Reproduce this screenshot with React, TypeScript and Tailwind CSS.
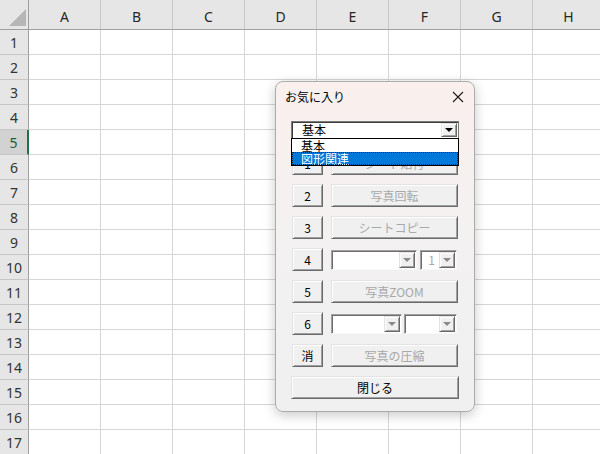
import React from 'react'

const cols = ['A', 'B', 'C', 'D', 'E', 'F', 'G', 'H']
const rows = Array.from({ length: 17 }, (_, i) => i + 1)

function Sheet() {
  return (
    <div className="flex flex-col font-['Noto_Sans',sans-serif]">
      <div className="flex h-[30px]">
        <div className="relative w-[29px] shrink-0 bg-[#e6e6e6] border-r border-b border-[#9f9f9f]">
          <div className="absolute right-[2px] bottom-[3px] w-0 h-0 border-l-[17px] border-l-transparent border-b-[17px] border-b-[#b6b6b6]" />
        </div>
        {cols.map((c) => (
          <div
            key={c}
            className="w-[72px] shrink-0 flex items-center justify-center pt-[3px] bg-[#e6e6e6] border-r border-r-[#c6c6c6] border-b border-b-[#9f9f9f] text-[14px] text-[#262626]"
          >
            {c}
          </div>
        ))}
      </div>
      {rows.map((r) => (
        <div key={r} className="flex h-[25px] shrink-0">
          <div
            className={
              r === 5
                ? 'w-[29px] shrink-0 flex items-center justify-center bg-[#d2d2d2] border-r-2 border-r-[#217346] border-b border-b-[#c6c6c6] text-[14px] text-[#1d5c3a]'
                : 'w-[29px] shrink-0 flex items-center justify-center bg-[#e6e6e6] border-r border-r-[#9f9f9f] border-b border-b-[#c6c6c6] text-[14px] text-[#333]'
            }
          >
            {r}
          </div>
          {cols.map((c) => (
            <div key={c} className="w-[72px] shrink-0 bg-white border-r border-b border-[#d6d6d6]" />
          ))}
        </div>
      ))}
    </div>
  )
}

function Btn({ children, disabled, className }: { children?: React.ReactNode; disabled?: boolean; className?: string }) {
  return (
    <div
      className={`flex items-center justify-center h-[23px] shrink-0 bg-[#f0f0f0] border border-t-[#e3e3e3] border-l-[#e3e3e3] border-r-[#696969] border-b-[#696969] shadow-[inset_1px_1px_0_#ffffff,inset_-1px_-1px_0_#a0a0a0] text-[12px] leading-none ${
        disabled ? 'text-[#a8a8a8]' : 'text-black'
      } ${className ?? ''}`}
    >
      {children}
    </div>
  )
}

function Arrow({ dark }: { dark?: boolean }) {
  return (
    <div className="w-[16px] h-full shrink-0 flex items-center justify-center bg-[#f0f0f0] border border-t-[#e3e3e3] border-l-[#e3e3e3] border-r-[#696969] border-b-[#696969] shadow-[inset_1px_1px_0_#ffffff,inset_-1px_-1px_0_#a0a0a0]">
      <div
        className={
          dark
            ? 'w-0 h-0 border-l-[4px] border-r-[4px] border-t-[4px] border-l-transparent border-r-transparent border-t-black'
            : 'w-0 h-0 border-l-[4px] border-r-[4px] border-t-[4px] border-l-transparent border-r-transparent border-t-[#8a8a8a]'
        }
      />
    </div>
  )
}

function Combo({ value, className }: { value?: string; className?: string }) {
  return (
    <div
      className={`flex h-[20px] shrink-0 bg-white border border-t-[#a0a0a0] border-l-[#a0a0a0] border-r-[#f8f8f8] border-b-[#f8f8f8] shadow-[inset_1px_1px_0_#6e6e6e] p-[1px] ${className ?? ''}`}
    >
      <div className="flex-1 flex items-center justify-end pr-[4px] text-[12px] text-[#a8a8a8]">{value}</div>
      <Arrow />
    </div>
  )
}

function Favorites() {
  return (
    <div className="absolute left-[275px] top-[81px] w-[200px] h-[331px] rounded-[8px] border border-[#ababab] bg-linear-to-b from-[#faf0ee] via-[#f3f1f1] to-[#f0f0f0] shadow-[0_3px_12px_rgba(0,0,0,0.22)] overflow-hidden font-['Noto_Sans_CJK_JP',sans-serif]">
      <div className="h-[29px] flex items-center justify-between pl-[9px] pr-[9px] text-[12px] text-black">
        <span>お気に入り</span>
        <svg width="12" height="12" viewBox="0 0 12 12" className="mr-[1px]">
          <path d="M1 1 L11 11 M11 1 L1 11" stroke="#1a1a1a" strokeWidth="1.1" />
        </svg>
      </div>
      <div className="flex flex-col px-[15px] pt-[10px]">
        <div className="relative">
          <div className="flex h-[18px] bg-white border border-[#7a7a7a] shadow-[inset_1px_1px_0_#3c3c3c] p-[1px]">
            <div className="flex-1 flex items-center pl-[9px] text-[12px] text-black leading-none">基本</div>
            <Arrow dark />
          </div>
          <div className="absolute left-0 right-0 top-[17px] z-10 bg-white border border-black text-[12px] leading-[13px]">
            <div className="h-[13px] pl-[9px] text-black">基本</div>
            <div className="h-[13px] pl-[9px] bg-[#0078d7] text-white outline-1 outline-dotted outline-offset-[-1px] outline-[#222]">図形関連</div>
          </div>
        </div>
        <div className="flex flex-col gap-[9px] mt-[13px]">
          <div className="flex gap-[8px] pl-[1px]">
            <Btn className="w-[31px]">1</Btn>
            <Btn disabled className="w-[127px]">シート貼付</Btn>
          </div>
          <div className="flex gap-[8px] pl-[1px]">
            <Btn className="w-[31px]">2</Btn>
            <Btn disabled className="w-[127px]">写真回転</Btn>
          </div>
          <div className="flex gap-[8px] pl-[1px]">
            <Btn className="w-[31px]">3</Btn>
            <Btn disabled className="w-[127px]">シートコピー</Btn>
          </div>
          <div className="flex items-center gap-[8px] pl-[1px]">
            <Btn className="w-[31px]">4</Btn>
            <div className="flex gap-[3px]">
              <Combo className="w-[86px]" />
              <Combo className="w-[37px]" value="1" />
            </div>
          </div>
          <div className="flex gap-[8px] pl-[1px]">
            <Btn className="w-[31px]">5</Btn>
            <Btn disabled className="w-[127px]">写真ZOOM</Btn>
          </div>
          <div className="flex items-center gap-[8px] pl-[1px]">
            <Btn className="w-[31px]">6</Btn>
            <div className="flex gap-[2px]">
              <Combo className="w-[71px]" />
              <Combo className="w-[53px]" />
            </div>
          </div>
          <div className="flex gap-[8px] pl-[1px]">
            <Btn className="w-[31px]">消</Btn>
            <Btn disabled className="w-[127px]">写真の圧縮</Btn>
          </div>
          <Btn className="w-[168px]">閉じる</Btn>
        </div>
      </div>
    </div>
  )
}

export default function App() {
  return (
    <div className="relative w-[600px] h-[454px] overflow-hidden bg-white">
      <Sheet />
      <Favorites />
    </div>
  )
}
